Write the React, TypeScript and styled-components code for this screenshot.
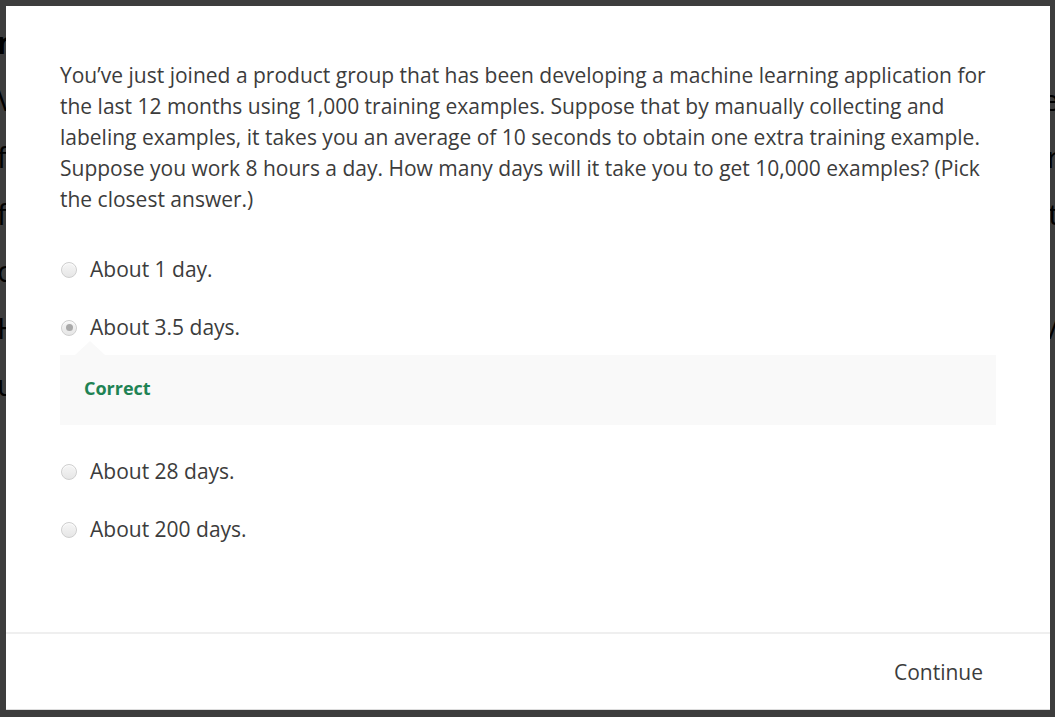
import React from "react";
import styled, { createGlobalStyle } from "styled-components";

const GlobalStyle = createGlobalStyle`
  html, body {
    margin: 0;
    padding: 0;
    width: 100%;
    height: 100%;
    overflow: hidden;
    background: #ffffff;
  }
  #root {
    width: 100%;
    height: 100%;
  }
  * {
    box-sizing: border-box;
  }
`;

/* ---------- page behind the modal ---------- */

const Page = styled.div`
  width: 100%;
  height: 100%;
  padding-top: 14px;
  display: flex;
  flex-direction: column;
  font-family: "Open Sans", "Liberation Sans", sans-serif;
  font-size: 30px;
  color: #000;
`;

const PageRow = styled.div<{ $bold?: boolean }>`
  height: 57px;
  display: flex;
  align-items: center;
  justify-content: space-between;
  margin-left: -3px;
  margin-right: -4px;
  font-weight: ${(p) => (p.$bold ? 700 : 400)};
  white-space: nowrap;
`;

const pageRows: { left: string; right: string; bold?: boolean }[] = [
  { left: "nd", right: "", bold: true },
  { left: "Vi", right: "e" },
  { left: "fo", right: "r" },
  { left: "fi", right: "t" },
  { left: "co", right: "" },
  { left: "Hi", right: "/" },
  { left: "ut", right: "" },
];

/* ---------- modal ---------- */

const Overlay = styled.div`
  position: fixed;
  inset: 0;
  background: rgba(0, 0, 0, 0.76);
  display: flex;
  padding: 6px 5px 7px 6px;
`;

const Modal = styled.div`
  flex: 1;
  background: #ffffff;
  display: flex;
  flex-direction: column;
  border-bottom: 1px solid #dcdcdc;
  font-family: "Open Sans", "Liberation Sans", sans-serif;
  color: #3c3c3c;
`;

const Body = styled.div`
  flex: 1;
  padding: 54px 54px 0 54px;
`;

const Question = styled.p`
  margin: 0 0 39px 0;
  font-size: 21px;
  line-height: 31px;
`;

const OptionList = styled.div`
  display: flex;
  flex-direction: column;
`;

const Option = styled.label<{ $tight?: boolean }>`
  display: flex;
  align-items: center;
  height: 31px;
  margin-bottom: ${(p) => (p.$tight ? "0" : "27px")};
  font-size: 21px;
  line-height: 31px;
  cursor: pointer;
`;

const Radio = styled.span<{ $checked?: boolean }>`
  width: 16px;
  height: 16px;
  margin-left: 1px;
  margin-right: 13px;
  border-radius: 50%;
  border: 1px solid #cfcfcf;
  background: linear-gradient(#f6f6f6, #e6e6e6);
  box-shadow: inset 0 1px 1px rgba(255, 255, 255, 0.8);
  display: flex;
  align-items: center;
  justify-content: center;
  flex-shrink: 0;

  &::after {
    content: "";
    width: 7px;
    height: 7px;
    border-radius: 50%;
    background: #a9a9a9;
    display: ${(p) => (p.$checked ? "block" : "none")};
  }
`;

const Feedback = styled.div`
  position: relative;
  margin: 12px 0 31px 0;
  background: #f9f9f9;
  padding: 22px 24px 26px 24px;
  height: 70px;
  display: flex;
  align-items: center;

  &::before {
    content: "";
    position: absolute;
    left: 15px;
    top: -14px;
    border-left: 15px solid transparent;
    border-right: 15px solid transparent;
    border-bottom: 14px solid #f9f9f9;
  }
`;

const FeedbackText = styled.span`
  font-size: 18px;
  font-weight: 700;
  color: #1f8354;
  line-height: 22px;
`;

const Footer = styled.div`
  height: 77px;
  border-top: 2px solid #efefef;
  display: flex;
  align-items: center;
  justify-content: flex-end;
  padding: 1px 54px 0 54px;
`;

const ContinueButton = styled.button`
  border: none;
  background: transparent;
  font-family: "Open Sans", "Liberation Sans", sans-serif;
  font-size: 21px;
  color: #3c3c3c;
  padding: 8px 13px;
  cursor: pointer;
`;

const options = [
  { label: "About 1 day.", checked: false },
  { label: "About 3.5 days.", checked: true, feedback: "Correct" },
  { label: "About 28 days.", checked: false },
  { label: "About 200 days.", checked: false },
];

export default function App() {
  return (
    <>
      <GlobalStyle />
      <Page aria-hidden="true">
        {pageRows.map((r, i) => (
          <PageRow key={i} $bold={r.bold}>
            <span>{r.left}</span>
            <span>{r.right}</span>
          </PageRow>
        ))}
      </Page>
      <Overlay>
        <Modal>
          <Body>
            <Question>
              You’ve just joined a product group that has been developing a machine learning
              application for the last 12 months using 1,000 training examples. Suppose that by
              manually collecting and labeling examples, it takes you an average of 10 seconds to
              obtain one extra training example. Suppose you work 8 hours a day. How many days will
              it take you to get 10,000 examples? (Pick the closest answer.)
            </Question>
            <OptionList>
              {options.map((o) => (
                <React.Fragment key={o.label}>
                  <Option $tight={!!o.feedback}>
                    <Radio $checked={o.checked} />
                    {o.label}
                  </Option>
                  {o.feedback && (
                    <Feedback>
                      <FeedbackText>{o.feedback}</FeedbackText>
                    </Feedback>
                  )}
                </React.Fragment>
              ))}
            </OptionList>
          </Body>
          <Footer>
            <ContinueButton>Continue</ContinueButton>
          </Footer>
        </Modal>
      </Overlay>
    </>
  );
}
